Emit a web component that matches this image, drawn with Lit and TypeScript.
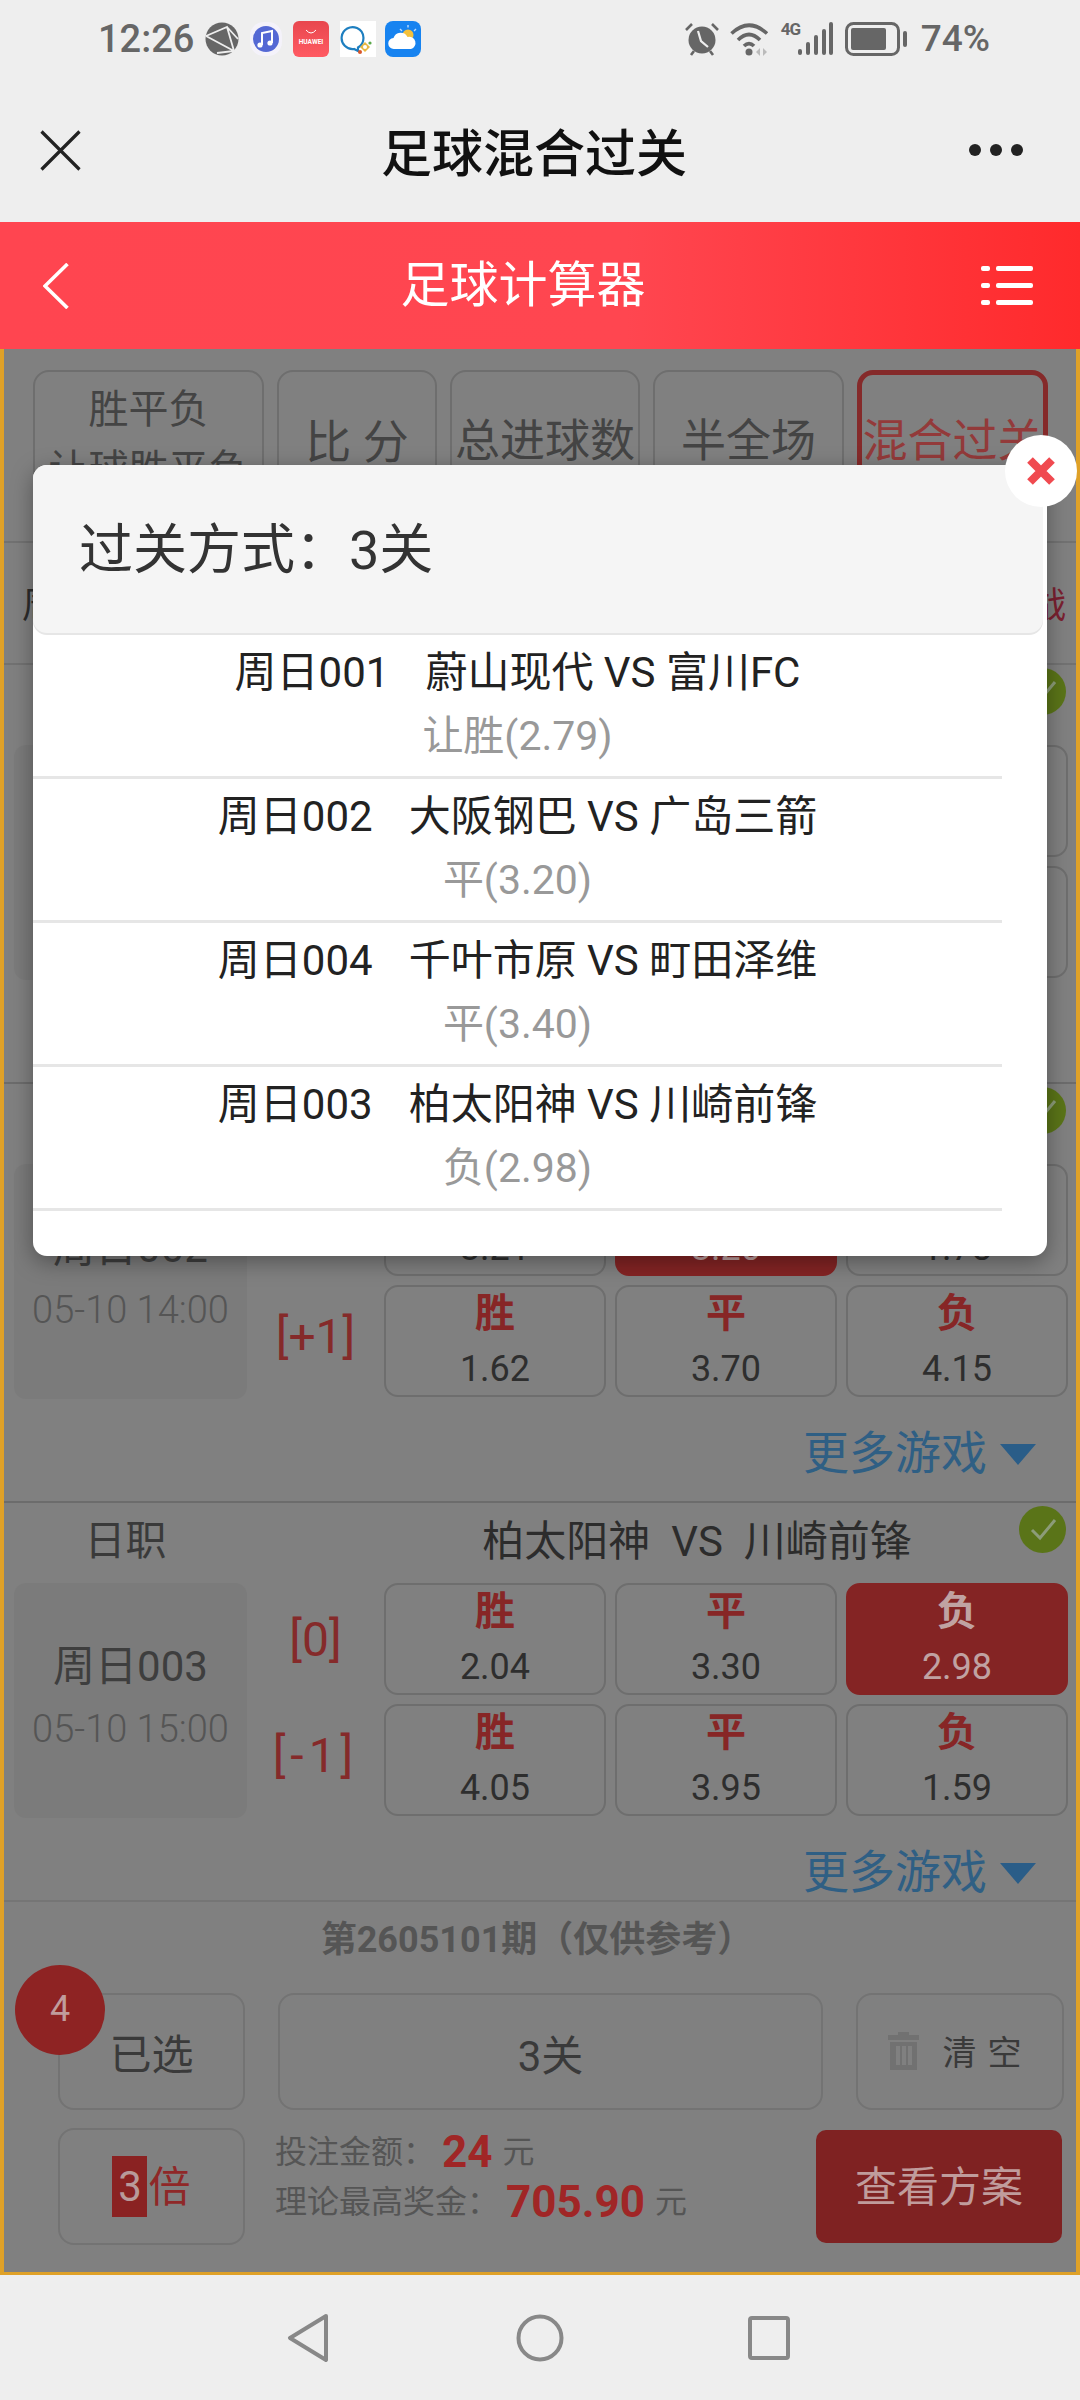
import { LitElement, html, css, svg } from 'lit';
import { customElement } from 'lit/decorators.js';
import { classMap } from 'lit/directives/class-map.js';

interface Odd { label: string; value: string; on?: boolean }
interface Line { handicap: string; odds: Odd[] }
interface Match { league: string; code: string; time: string; teams: string; lines: Line[] }

const odds = (a: string, b: string, c: string, on = -1): Odd[] => [
  { label: '胜', value: a, on: on === 0 },
  { label: '平', value: b, on: on === 1 },
  { label: '负', value: c, on: on === 2 },
];

const matches: Match[] = [
  {
    league: '韩职', code: '周日001', time: '05-10 13:00', teams: '蔚山现代  VS  富川FC',
    lines: [
      { handicap: '[0]', odds: odds('1.55', '3.85', '4.60') },
      { handicap: '[-1]', odds: odds('2.79', '3.45', '2.05', 0) },
    ],
  },
  {
    league: '日职', code: '周日002', time: '05-10 14:00', teams: '大阪钢巴  VS  广岛三箭',
    lines: [
      { handicap: '[0]', odds: odds('3.21', '3.20', '1.78', 1) },
      { handicap: '[+1]', odds: odds('1.62', '3.70', '4.15') },
    ],
  },
  {
    league: '日职', code: '周日003', time: '05-10 15:00', teams: '柏太阳神  VS  川崎前锋',
    lines: [
      { handicap: '[0]', odds: odds('2.04', '3.30', '2.98', 2) },
      { handicap: '[-1]', odds: odds('4.05', '3.95', '1.59') },
    ],
  },
];

const picks = [
  { code: '周日001', teams: '蔚山现代 VS 富川FC', pick: '让胜(2.79)' },
  { code: '周日002', teams: '大阪钢巴 VS 广岛三箭', pick: '平(3.20)' },
  { code: '周日004', teams: '千叶市原 VS 町田泽维', pick: '平(3.40)' },
  { code: '周日003', teams: '柏太阳神 VS 川崎前锋', pick: '负(2.98)' },
];

const tabs = [
  { cls: 'w1', text: ['胜平负', '让球胜平负'] },
  { cls: 'w2', text: ['比 分'] },
  { cls: 'w3', text: ['总进球数'] },
  { cls: 'w4', text: ['半全场'] },
  { cls: 'w4 on', text: ['混合过关'] },
];

// status bar icons
const globeIcon = svg`<svg width="34" height="34" viewBox="0 0 34 34"><circle cx="17" cy="17" r="16.5" fill="#666"/><path d="M1 14 L22 5 L29 29 L12 31 M1 14 L29 29 M22 5 L33 17" fill="none" stroke="#eee" stroke-width="1.8"/></svg>`;
const musicIcon = svg`<svg width="32" height="34" viewBox="0 0 32 34"><rect width="32" height="34" rx="14" fill="#f4f2fa"/><circle cx="16" cy="17" r="13" fill="#5468d4"/><path d="M12 23 V11 L22 9 V21" fill="none" stroke="#fff" stroke-width="2"/><circle cx="10" cy="23" r="2.6" fill="#fff"/><circle cx="20" cy="21" r="2.6" fill="#fff"/></svg>`;
const huaweiIcon = svg`<svg width="36" height="36" viewBox="0 0 36 36"><defs><linearGradient id="hw" x1="0" y1="0" x2="0" y2="1"><stop offset="0" stop-color="#e8474e"/><stop offset="1" stop-color="#ff5a62"/></linearGradient></defs><rect width="36" height="36" rx="6" fill="url(#hw)"/><path d="M13 9 Q18 15 23 9" fill="none" stroke="#fff" stroke-width="1"/><text x="18" y="23" font-family="Roboto" font-size="6.6" font-weight="700" fill="#fff" text-anchor="middle">HUAWEI</text></svg>`;
const messageIcon = svg`<svg width="36" height="36" viewBox="0 0 36 36"><rect width="36" height="36" fill="#fff"/><path d="M17 7 a11 11 0 1 0 -3 21 l4 2 v-3.500 a11 11 0 0 0 -1 -19.500 Z" fill="none" stroke="#1e7fc0" stroke-width="2.200"/><path d="M25 21 l5 5 -5 5 -5 -5 Z" fill="#e8b840"/><circle cx="25" cy="26" r="2" fill="#fff"/><circle cx="20" cy="31" r="2" fill="#d8582c"/><circle cx="30" cy="22" r="1.600" fill="#5aa84a"/></svg>`;
const weatherIcon = svg`<svg width="36" height="36" viewBox="0 0 36 36"><rect width="36" height="36" rx="8" fill="#1783f0"/><circle cx="23" cy="14" r="5.500" fill="#f5c13c"/><path d="M23 4 V6.500 M31 8 L29 10 M15 8 L17 10" stroke="#bcdcff" stroke-width="1.400"/><path d="M9 28 a5.500 5.500 0 0 1 -0.500 -11 a7.500 7.500 0 0 1 14 -1 a6 6 0 0 1 3.500 12 Z" fill="#fff"/></svg>`;
const alarmIcon = svg`<svg width="34" height="34" viewBox="0 0 34 34"><path d="M1 8 L7 2 M33 8 L27 2 M6 33 L9 29 M28 33 L25 29" stroke="#666" stroke-width="2.600" fill="none"/><circle cx="17" cy="18" r="13.500" fill="#666"/><path d="M13 9 L16 19 L23 25" fill="none" stroke="#eee" stroke-width="2.200"/></svg>`;
const wifiIcon = svg`<svg width="40" height="34" viewBox="0 0 40 34"><g fill="none" stroke="#666" stroke-width="3.600"><path d="M1.500 11.500 Q19 -5 37 11.500"/><path d="M8 18 Q19 7 30 18"/><path d="M14 24 Q19 19 24 24"/></g><circle cx="19" cy="30" r="3.500" fill="#666"/><path d="M30 26 l-4 4 4 4 Z M33 26 l4 4 -4 4 Z" fill="#bbb"/></svg>`;
const signalIcon = svg`<svg width="36" height="34" viewBox="0 0 36 34"><g fill="#666"><rect x="1" y="27" width="4" height="6" rx="2"/><rect x="9" y="20" width="4" height="13" rx="2"/><rect x="17" y="13" width="4" height="20" rx="2"/><rect x="25" y="7" width="4" height="26" rx="2"/><rect x="32" y="0" width="4" height="33" rx="2"/></g></svg>`;
const batteryIcon = svg`<svg width="64" height="34" viewBox="0 0 64 34"><rect x="1.500" y="1.500" width="52" height="31" rx="7" fill="none" stroke="#666" stroke-width="3"/><rect x="6" y="6" width="35" height="22" rx="2" fill="#666"/><rect x="58" y="9" width="4" height="16" rx="2" fill="#666"/></svg>`;

// bar icons
const closeIcon = svg`<svg width="41" height="41" viewBox="0 0 41 41"><path d="M1.500 1.500 L39.500 39.500 M39.500 1.500 L1.500 39.500" stroke="#222" stroke-width="3.200" fill="none"/></svg>`;
const backIcon = svg`<svg width="26" height="46" viewBox="0 0 26 46"><path d="M24.500 1 L2 23 L24.500 45" fill="none" stroke="#fff" stroke-width="3.600"/></svg>`;
const menuIcon = svg`<svg width="52" height="40" viewBox="0 0 52 40" fill="#fff"><rect x="0" y="0" width="9" height="5" rx="2"/><rect x="15" y="0" width="37" height="5" rx="2"/><rect x="0" y="17" width="9" height="5" rx="2"/><rect x="15" y="17" width="37" height="5" rx="2"/><rect x="0" y="34" width="9" height="5" rx="2"/><rect x="15" y="34" width="37" height="5" rx="2"/></svg>`;
const checkIcon = svg`<svg width="47" height="47" viewBox="0 0 47 47"><circle cx="23.500" cy="23.500" r="23.500" fill="#5a7418"/><path d="M13 24 L21 32 L36 14" fill="none" stroke="#8c9c78" stroke-width="3"/></svg>`;
const crossIcon = svg`<svg width="30" height="30" viewBox="0 0 30 30"><path d="M4 4 L26 26 M26 4 L4 26" stroke="#f04a50" stroke-width="8" fill="none"/></svg>`;
const trashIcon = svg`<svg width="31" height="38" viewBox="0 0 31 38" fill="#717171"><rect x="10" y="0" width="11" height="4"/><rect x="0" y="3" width="31" height="5"/><path d="M2 10 H29 V38 H2 Z M8 14 V33 H12 V14 Z M14 14 V33 H18 V14 Z M20 14 V33 H24 V14 Z" fill-rule="evenodd"/></svg>`;
const navBack = svg`<svg width="42" height="48" viewBox="0 0 42 48"><path d="M39 2 L3 24 L39 46 Z" fill="none" stroke="#888" stroke-width="4" stroke-linejoin="round"/></svg>`;
const navHome = svg`<svg width="48" height="48" viewBox="0 0 48 48"><circle cx="24" cy="24" r="21.500" fill="none" stroke="#888" stroke-width="4"/></svg>`;
const navRecent = svg`<svg width="42" height="44" viewBox="0 0 42 44"><rect x="2" y="2" width="38" height="40" rx="2" fill="none" stroke="#888" stroke-width="4"/></svg>`;

@customElement('app-root')
export class AppRoot extends LitElement
{
  static styles = css`
    :host{
      display: flex;
      flex-direction: column;
      width: 1080px;
      height: 2400px;
      overflow: hidden;
      background: #eee;
      font-family: Roboto, "Noto Sans CJK SC", sans-serif;
      color: #333;
    }
    svg{ display: block; flex: none; }

    .status{
      display: flex;
      align-items: center;
      height: 78px;
      box-sizing: border-box;
      padding: 0 90px 0 98px;
      flex: none;
    }
    .time{ font-size: 38px; font-weight: 500; color: #666; margin-right: 11px; line-height: 36px; }
    .status svg{ margin-right: 11px; }
    .status span svg{ margin-right: 0; }
    .status .msg{ margin-right: 9px; }
    .status .gap{ margin-left: auto; }
    .fourg{ font-size: 17px; font-weight: 700; color: #666; width: 16px; align-self: flex-start; margin-top: 19px; letter-spacing: -1px; }
    .status .signal{ margin-right: 12px; }
    .status .batt{ margin-right: 12px; }
    .pct{ font-size: 37px; font-weight: 500; color: #666; line-height: 36px; }

    .titlebar{
      display: flex;
      align-items: center;
      height: 144px;
      box-sizing: border-box;
      padding: 0 57px 0 40px;
      flex: none;
    }
    .titlebar h1{
      flex: 1;
      margin: 0;
      padding-left: 18px;
      font-size: 51px;
      font-weight: 500;
      color: #111;
      text-align: center;
    }
    .dots{ display: flex; gap: 9px; }
    .dots i{ width: 12px; height: 12px; border-radius: 50%; background: #222; }

    .redbar{
      display: flex;
      align-items: center;
      height: 127px;
      box-sizing: border-box;
      padding: 0 47px 0 43px;
      flex: none;
      background: linear-gradient(90deg, #ff4550 0%, #ff4650 58%, #ff2a2c 100%);
    }
    .redbar h2{
      flex: 1;
      margin: 0 0 10px;
      padding-right: 4px;
      font-size: 49px;
      font-weight: 400;
      color: #fff;
      text-align: center;
    }

    .page{
      position: relative;
      display: flex;
      flex-direction: column;
      height: 1926px;
      flex: none;
      box-sizing: border-box;
      border: solid #dfa128;
      border-width: 0 4px 3px;
      background: #808080;
    }
    .tabs{
      display: flex;
      gap: 13px;
      height: 194px;
      box-sizing: border-box;
      padding: 21px 0 0 29px;
      border-bottom: 2px solid #727272;
      flex: none;
      overflow: hidden;
    }
    .tab{
      display: flex;
      flex-direction: column;
      align-items: center;
      justify-content: center;
      height: 140px;
      box-sizing: border-box;
      border: 2px solid #6e6e6e;
      border-radius: 16px;
      font-size: 40px;
      line-height: 60px;
      color: #444;
      white-space: nowrap;
      overflow: hidden;
    }
    .tab.w1{ width: 231px; }
    .tab.w2{ width: 160px; font-size: 46px; padding-top: 4px; }
    .tab.w3{ width: 190px; font-size: 45px; padding-top: 4px; }
    .tab.w4{ width: 191px; font-size: 45px; padding-top: 4px; }
    .tab.on{ border: 5px solid #852a2a; color: #933a3a; }

    .sorter{
      display: flex;
      align-items: center;
      justify-content: space-between;
      height: 122px;
      box-sizing: border-box;
      padding: 0 10px 2px 18px;
      border-bottom: 2px solid #727272;
      flex: none;
      font-size: 36px;
      color: #2c2c2c;
    }
    .sorter b{ font-weight: 400; color: #7a2030; }

    .list{ flex: 1; min-height: 0; overflow: hidden; }
    .match{
      position: relative;
      height: 419px;
      box-sizing: border-box;
      border-bottom: 2px solid #6c6c6c;
      padding-left: 10px;
    }
    .head{
      display: flex;
      align-items: center;
      height: 80px;
      box-sizing: border-box;
      padding-bottom: 12px;
      font-size: 41px;
      color: #2c2c2c;
    }
    .league{ width: 223px; padding-right: 10px; text-align: center; color: #3a3a3a; }
    .teams{ width: 734px; margin-left: 83px; font-size: 42px; text-align: center; white-space: pre; }
    .check{ position: absolute; left: 1015px; top: 3px; }
    .body{ display: flex; }
    .side{
      display: flex;
      flex-direction: column;
      align-items: center;
      justify-content: center;
      width: 233px;
      height: 235px;
      box-sizing: border-box;
      padding-bottom: 5px;
      border-radius: 12px;
      background: #7b7b7b;
    }
    .code{ font-size: 42px; line-height: 62px; color: #3e3e3e; }
    .when{ font-size: 38px; font-weight: 300; line-height: 62px; color: #555; }
    .lines{ display: flex; flex-direction: column; gap: 9px; }
    .line{ display: flex; }
    .hcp{
      display: flex;
      align-items: center;
      justify-content: center;
      width: 137px;
      font-size: 48px;
      color: #852a2a;
    }
    .hcp.neg{ letter-spacing: 5px; }
    .line + .line .hcp{ padding-bottom: 10px; box-sizing: border-box; }
    .cells{ display: flex; gap: 9px; }
    .cell{
      width: 222px;
      height: 112px;
      box-sizing: border-box;
      border: 2px solid #6e6e6e;
      border-radius: 14px;
      text-align: center;
    }
    .cell b{ display: block; font-size: 40px; line-height: 54px; color: #872626; }
    .cell span{ display: block; font-size: 36px; line-height: 56px; color: #2e2e2e; }
    .cell.on{ background: #842424; border-color: #842424; }
    .cell.on b, .cell.on span{ color: #c0a2a2; }
    .more{
      display: flex;
      align-items: center;
      justify-content: flex-end;
      gap: 13px;
      height: 90px;
      padding: 21px 40px 0 0;
      box-sizing: border-box;
      font-size: 46px;
      color: #2f5f84;
    }
    .more span{ margin-bottom: 12px; }
    .more i{
      width: 0;
      height: 0;
      border-style: solid;
      border-width: 21px 18px 0;
      border-color: #2a5d88 transparent transparent;
    }

    .foot{
      position: relative;
      height: 372px;
      flex: none;
      box-sizing: border-box;
      border-top: 2px solid #757575;
      background: #808080;
    }
    .issue{
      height: 91px;
      padding-right: 6px;
      font-size: 36px;
      font-weight: 700;
      line-height: 76px;
      text-align: center;
      color: #555;
    }
    .row{ display: flex; height: 117px; padding-left: 54px; }
    .row + .row{ margin-top: 18px; }
    .box{
      display: flex;
      align-items: center;
      justify-content: center;
      box-sizing: border-box;
      border: 2px solid #737373;
      border-radius: 16px;
      font-size: 42px;
      color: #3a3a3a;
    }
    .picked{ width: 187px; margin-right: 33px; }
    .parlay{ width: 545px; margin-right: 33px; padding-top: 2px; }
    .clear{ width: 208px; gap: 24px; font-size: 34px; letter-spacing: 11px; padding-bottom: 2px; }
    .times{ width: 187px; color: #8f2828; }
    .times span{ width: 35px; height: 61px; line-height: 61px; text-align: center; background: #8a2222; color: #b89a9a; margin-right: 1px; }
    .times em{ font-style: normal; margin-bottom: 6px; }
    .info{
      display: flex;
      flex-direction: column;
      justify-content: center;
      box-sizing: border-box;
      padding-bottom: 20px;
      margin-left: 30px;
      font-size: 32px;
      line-height: 50px;
      color: #555;
    }
    .info div{ display: flex; align-items: center; height: 50px; white-space: pre; }
    .info strong{ font-size: 44px; font-weight: 700; color: #a02626; margin: 0 10px 0 7px; }
    .view{
      display: flex;
      align-items: center;
      justify-content: center;
      width: 246px;
      height: 113px;
      box-sizing: border-box;
      padding-bottom: 6px;
      margin: 2px 14px 0 auto;
      border-radius: 10px;
      background: #7f2222;
      font-size: 42px;
      color: #c09c9c;
    }
    .count{
      position: absolute;
      left: 11px;
      top: 63px;
      width: 90px;
      height: 90px;
      border-radius: 50%;
      background: #8e2323;
      font-size: 36px;
      line-height: 88px;
      text-align: center;
      color: #c09c9c;
    }

    .modal{
      position: absolute;
      left: 29px;
      top: 116px;
      width: 1014px;
      height: 791px;
      border-radius: 14px;
      background: #fff;
      box-shadow: 0 6px 22px rgba(0,0,0,.35);
    }
    .modal header{
      display: flex;
      align-items: center;
      height: 168px;
      box-sizing: border-box;
      margin: 0 4px 2px 0;
      padding: 0 0 8px 46px;
      border-radius: 14px;
      background: #f5f5f5;
      box-shadow: 0 2px 0 #e6e6e6;
      font-size: 54px;
      color: #333;
    }
    .x{
      position: absolute;
      right: -30px;
      top: -30px;
      display: flex;
      align-items: center;
      justify-content: center;
      width: 72px;
      height: 72px;
      border-radius: 50%;
      background: #fff;
    }
    .pick{
      width: 969px;
      height: 144px;
      box-sizing: border-box;
      padding-top: 7px;
      border-bottom: 3px solid #e6e6e6;
      text-align: center;
    }
    .pick p{ margin: 0; font-size: 42px; line-height: 62px; color: #222; white-space: pre; }
    .pick p span{ margin-right: 36px; }
    .pick small{ display: block; font-size: 41px; line-height: 64px; color: #999; }

    .nav{
      display: flex;
      align-items: center;
      height: 125px;
      flex: 1;
      box-sizing: border-box;
      padding: 0 0 0 287px;
      background: #eee;
    }
    .nav svg:nth-child(1){ margin-right: 187px; }
    .nav svg:nth-child(2){ margin-right: 184px; }
  `;

  private renderMatch(m: Match)
  {
    return html`
      <div class="match">
        <div class="head">
          <div class="league">${m.league}</div>
          <div class="teams">${m.teams}</div>
        </div>
        <div class="check">${checkIcon}</div>
        <div class="body">
          <div class="side">
            <div class="code">${m.code}</div>
            <div class="when">${m.time}</div>
          </div>
          <div class="lines">
            ${m.lines.map((l) => html`
              <div class="line">
                <div class=${classMap({ hcp: true, neg: l.handicap.startsWith('[-') })}>${l.handicap}</div>
                <div class="cells">
                  ${l.odds.map((o) => html`
                    <div class=${classMap({ cell: true, on: o.on === true })}>
                      <b>${o.label}</b><span>${o.value}</span>
                    </div>`)}
                </div>
              </div>`)}
          </div>
        </div>
        <div class="more"><span>更多游戏</span><i></i></div>
      </div>
    `;
  }

  render()
  {
    return html`
      <div class="status">
        <span class="time">12:26</span>
        ${globeIcon}${musicIcon}${huaweiIcon}<span class="msg">${messageIcon}</span>${weatherIcon}
        <span class="gap"></span>
        ${alarmIcon}${wifiIcon}
        <span class="fourg">4G</span>
        <span class="signal">${signalIcon}</span>
        <span class="batt">${batteryIcon}</span>
        <span class="pct">74%</span>
      </div>
      <div class="titlebar">
        ${closeIcon}
        <h1>足球混合过关</h1>
        <div class="dots"><i></i><i></i><i></i></div>
      </div>
      <div class="redbar">
        ${backIcon}
        <h2>足球计算器</h2>
        ${menuIcon}
      </div>

      <div class="page">
        <div class="tabs">
          ${tabs.map((t) => html`<div class="tab ${t.cls}">${t.text.map((s) => html`<div>${s}</div>`)}</div>`)}
        </div>
        <div class="sorter"><span>周日</span><b>战</b></div>
        <div class="list">${matches.map((m) => this.renderMatch(m))}</div>

        <div class="foot">
          <div class="issue">第2605101期（仅供参考）</div>
          <div class="row">
            <div class="box picked">已选</div>
            <div class="box parlay">3关</div>
            <div class="box clear">${trashIcon}<span>清空</span></div>
          </div>
          <div class="row">
            <div class="box times"><span>3</span><em>倍</em></div>
            <div class="info">
              <div>投注金额：<strong>24</strong>元</div>
              <div>理论最高奖金：<strong>705.90</strong>元</div>
            </div>
            <div class="view">查看方案</div>
          </div>
          <div class="count">4</div>
        </div>

        <div class="modal">
          <header>过关方式：3关</header>
          ${picks.map((p) => html`
            <div class="pick">
              <p><span>${p.code}</span>${p.teams}</p>
              <small>${p.pick}</small>
            </div>`)}
          <div class="x">${crossIcon}</div>
        </div>
      </div>

      <div class="nav">${navBack}${navHome}${navRecent}</div>
    `;
  }
}
